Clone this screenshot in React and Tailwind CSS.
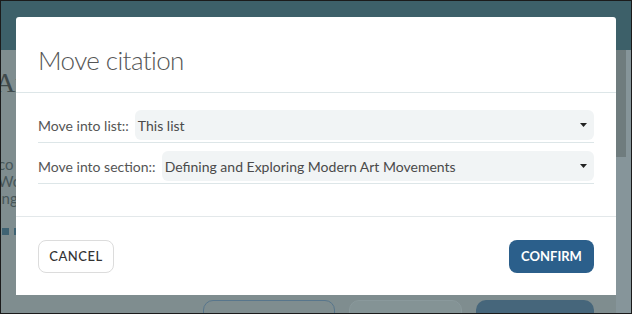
import React from "react";

const font = { fontFamily: "Lato, 'Open Sans', sans-serif" };

function Caret() {
  return (
    <svg width="7" height="4" viewBox="0 0 7 4" className="shrink-0">
      <path d="M0 0h7L3.5 4z" fill="#222" />
    </svg>
  );
}

function Field({ label, value }) {
  return (
    <div className="flex items-center border-b border-[#dde6e8] pb-[2px]">
      <span className="text-[14px] text-[#555] whitespace-nowrap">{label}</span>
      <div className="ml-[6px] flex-1 h-[30px] rounded-[6px] bg-[#f1f4f5] flex items-center justify-between pl-[3px] pr-[7px]">
        <span className="text-[14px] text-[#4a4a4a]">{value}</span>
        <Caret />
      </div>
    </div>
  );
}

export default function App() {
  return (
    <div
      className="relative w-[632px] h-[314px] overflow-hidden border border-[#1b1b1b] bg-[#7f8d8f]"
      style={font}
    >
      {/* page behind the overlay */}
      <div className="h-[49px] bg-[#3d6069]" />
      <div className="pt-[18px] text-[28px] leading-[30px] text-[#3f4a4c] -ml-[6px]" style={{ fontFamily: "'Liberation Serif', serif" }}>
        Ar
      </div>
      <div className="mt-[58px] -ml-[3px] text-[15px] leading-[17px] text-[#47575a]">
        <div>co</div>
        <div>Wo</div>
        <div>ing</div>
      </div>
      <div className="mt-[21px] ml-[1px] flex gap-[5px]">
        <div className="w-[7px] h-[7px] bg-[#3f6373]" />
        <div className="w-[2px] h-[7px] bg-[#3f6373]" />
      </div>
      <div className="absolute left-[202px] top-[299px] flex gap-[14px]">
        <div className="w-[132px] h-[20px] rounded-t-[10px] border border-[#58768c]" />
        <div className="w-[113px] h-[20px] rounded-t-[10px] border border-[#8a999c] bg-[#849395]" />
        <div className="w-[118px] h-[20px] rounded-t-[10px] bg-[#46667b]" />
      </div>

      {/* scrollbar */}
      <div className="absolute right-0 top-[49px] bottom-0 w-[15px] flex bg-[#86959a]">
        <div className="w-[10px] h-[107px] bg-[#6f7c7e]" />
      </div>

      {/* modal */}
      <div className="absolute left-[15px] top-[16px] w-[600px] h-[278px] bg-white rounded-t-[3px] flex flex-col">
        <div className="h-[76px] border-b border-[#dde6e8] px-[22px] pt-[27px]">
          <h2 className="text-[26px] leading-[32px] font-light tracking-[-0.6px] text-[#555]">Move citation</h2>
        </div>
        <div className="px-[22px] pt-[17px] pb-[32px] flex flex-col gap-[8px] border-b border-[#e3e8ea]">
          <Field label="Move into list::" value="This list" />
          <Field label="Move into section::" value="Defining and Exploring Modern Art Movements" />
        </div>
        <div className="px-[22px] pt-[23px] flex justify-between">
          <button className="h-[33px] w-[76px] rounded-[8px] border border-[#dcdcdc] text-[13px] tracking-[0.5px] text-[#333] font-medium">
            CANCEL
          </button>
          <button className="h-[33px] w-[85px] rounded-[8px] bg-[#2b5f8b] text-[13px] text-white font-bold">
            CONFIRM
          </button>
        </div>
      </div>
    </div>
  );
}
